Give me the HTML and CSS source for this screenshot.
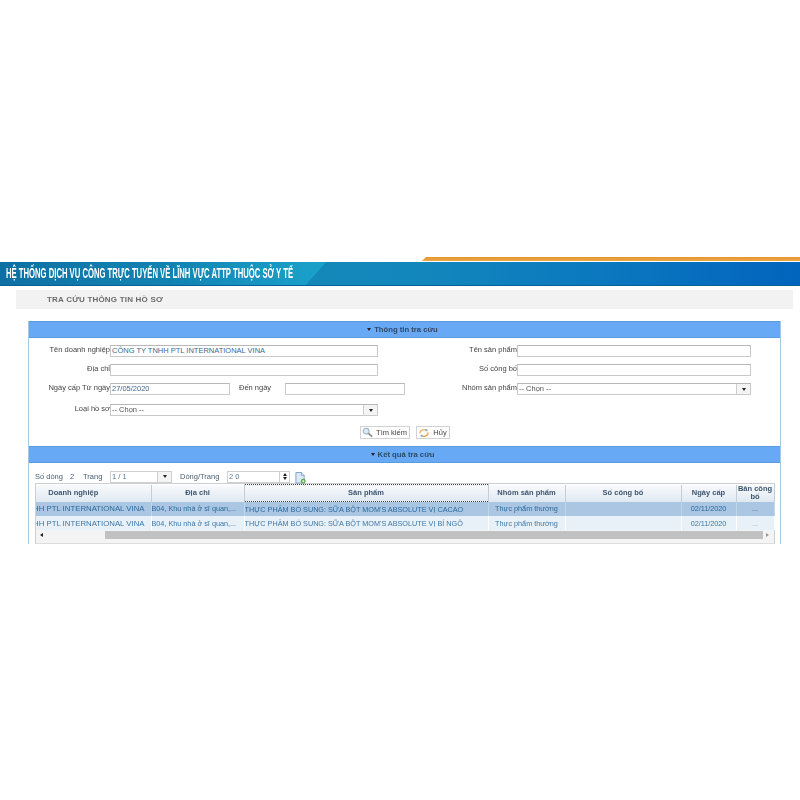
FILE: index.html
```html
<!DOCTYPE html>
<html lang="vi">
<head>
    <meta charset="UTF-8">
    <title>Tra cứu thông tin hồ sơ</title>
    <link rel="stylesheet" href="styles.css">
</head>

<body>
    <div class="page">
        <div class="accent-row"><div class="accent"></div></div>
        <div class="banner">
            <div class="banner-wedge"></div>
            <h1>HỆ THỐNG DỊCH VỤ CÔNG TRỰC TUYẾN VỀ LĨNH VỰC ATTP THUỘC SỞ Y TẾ</h1>
        </div>
        <div class="page-title">TRA CỨU THÔNG TIN HỒ SƠ</div>

        <div class="panel">
            <div class="panel-head"><span class="caret"></span>Thông tin tra cứu</div>
            <div class="search-form">
                <div class="form-col">
                    <div class="form-row">
                        <label>Tên doanh nghiệp</label>
                        <div class="input wide">CÔNG TY TNHH PTL INTERNATIONAL VINA</div>
                    </div>
                    <div class="form-row">
                        <label>Địa chỉ</label>
                        <div class="input wide"></div>
                    </div>
                    <div class="form-row">
                        <label>Ngày cấp Từ ngày</label>
                        <div class="input date">27/05/2020</div>
                        <span class="date-to">Đến ngày</span>
                        <div class="input date-end"></div>
                    </div>
                    <div class="form-row last">
                        <label>Loại hồ sơ</label>
                        <div class="input wide select">-- Chọn --<span class="select-btn"><span class="caret dark"></span></span></div>
                    </div>
                </div>
                <div class="form-col right">
                    <div class="form-row">
                        <label>Tên sản phẩm</label>
                        <div class="input wide"></div>
                    </div>
                    <div class="form-row">
                        <label>Số công bố</label>
                        <div class="input wide"></div>
                    </div>
                    <div class="form-row">
                        <label>Nhóm sản phẩm</label>
                        <div class="input wide select">-- Chọn --<span class="select-btn"><span class="caret dark"></span></span></div>
                    </div>
                </div>
            </div>
            <div class="actions">
                <button class="btn search">
                    <svg width="11" height="11" viewBox="0 0 12 12"><circle cx="4.5" cy="4.5" r="3.2" fill="#dce8f2" stroke="#9fb4c6" stroke-width="1.2"/><path d="M7 7l4 3.5" stroke="#8d8d8d" stroke-width="2"/></svg>
                    Tìm kiếm
                </button>
                <button class="btn cancel">
                    <svg width="12" height="10" viewBox="0 0 13 11"><path d="M2 6a4.5 4 0 0 1 7-3.5" fill="none" stroke="#eeb35c" stroke-width="1.6"/><path d="M11 5a4.5 4 0 0 1-7 3.5" fill="none" stroke="#e9a24a" stroke-width="1.6"/><path d="M8 0.8l3 1.4-2.4 2z" fill="#7fa6cf"/><path d="M5 10.2l-3-1.4 2.4-2z" fill="#7fa6cf"/></svg>
                    Hủy
                </button>
            </div>

            <div class="panel-head"><span class="caret"></span>Kết quả tra cứu</div>
            <div class="results">
                <div class="toolbar">
                    <span class="count-label">Số dòng</span>
                    <span class="count-value">2</span>
                    <span class="page-label">Trang</span>
                    <div class="spin page-select">1 / 1<span class="select-btn"><span class="caret dark"></span></span></div>
                    <span class="rows-label">Dòng/Trang</span>
                    <div class="spin rows-input">2 0<span class="spin-btn"><i class="up"></i><i class="down"></i></span></div>
                    <svg class="export" width="11" height="12" viewBox="0 0 12 13"><path d="M1 .5h6l3 3v8.5H1z" fill="#dce9f6" stroke="#7f9fc0"/><path d="M7 .5v3h3" fill="#fff" stroke="#7f9fc0"/><circle cx="9" cy="10" r="2.6" fill="#5aa845"/><path d="M7.6 10h2.8M9 8.6v2.8" stroke="#fff" stroke-width=".8"/></svg>
                </div>
                <div class="grid">
                    <table>
                        <colgroup>
                            <col class="c1"><col class="c2"><col class="c3"><col class="c4"><col class="c5"><col class="c6"><col class="c7">
                        </colgroup>
                        <thead>
                            <tr>
                                <th class="first">Doanh nghiệp</th>
                                <th>Địa chỉ</th>
                                <th class="sorted">Sản phẩm</th>
                                <th>Nhóm sản phẩm</th>
                                <th>Số công bố</th>
                                <th>Ngày cấp</th>
                                <th>Bản công bố</th>
                            </tr>
                        </thead>
                        <tbody>
                            <tr class="selected">
                                <td><div class="clip-left">CÔNG TY TNHH PTL INTERNATIONAL VINA</div></td>
                                <td>B04, Khu nhà ở sĩ quan,...</td>
                                <td>THỰC PHẨM BỔ SUNG: SỮA BỘT MOM'S ABSOLUTE VỊ CACAO</td>
                                <td class="center">Thực phẩm thường</td>
                                <td></td>
                                <td class="center">02/11/2020</td>
                                <td class="center faint">...</td>
                            </tr>
                            <tr>
                                <td><div class="clip-left">CÔNG TY TNHH PTL INTERNATIONAL VINA</div></td>
                                <td>B04, Khu nhà ở sĩ quan,...</td>
                                <td>THỰC PHẨM BỔ SUNG: SỮA BỘT MOM'S ABSOLUTE VỊ BÍ NGÔ</td>
                                <td class="center">Thực phẩm thường</td>
                                <td></td>
                                <td class="center">02/11/2020</td>
                                <td class="center faint">...</td>
                            </tr>
                        </tbody>
                    </table>
                    <div class="scrollbar">
                        <span class="arrow left"></span>
                        <div class="thumb"></div>
                        <span class="arrow right"></span>
                    </div>
                </div>
            </div>
        </div>
    </div>
</body>
</html>
```

FILE: styles.css
```css
body {
    margin: 0;
    background-color: #fff;
    font-family: 'Liberation Sans', Arial, sans-serif;
    font-size: 7.5px;
    color: #444;
}

.page {
    padding-top: 257px;
    height: 544px;
    box-sizing: border-box;
    filter: blur(0.3px);
}

.accent-row {
    height: 5px;
    display: flex;
    justify-content: flex-end;
}

.accent {
    width: 378px;
    height: 4px;
    background: linear-gradient(#e8952c, #e9a648);
    clip-path: polygon(4px 0, 100% 0, 100% 100%, 0 100%);
}

.banner {
    position: relative;
    height: 24px;
    background: linear-gradient(90deg, #0e6fa2 0, #1180ae 130px, #1488b8 300px, #1287bc 420px, #0b78bf 600px, #0264bd 800px);
    border-bottom: 1px solid #0a5f96;
    box-sizing: border-box;
    overflow: hidden;
}

.banner-wedge {
    position: absolute;
    top: 0;
    left: 170px;
    width: 156px;
    height: 100%;
    background: linear-gradient(90deg, rgba(28, 160, 200, 0), #1aa2c9);
    clip-path: polygon(0 0, 100% 0, 87% 100%, 0 100%);
}

/* no condensed face installed, so the title is squeezed to the reference width */
h1 {
    position: relative;
    margin: 0 0 0 6px;
    font-size: 14.5px;
    font-weight: bold;
    line-height: 23px;
    color: #fff;
    white-space: nowrap;
    transform: scaleX(0.53);
    transform-origin: left center;
}

.page-title {
    margin: 4px 7px 0 16px;
    height: 19px;
    padding-left: 31px;
    background-color: #f2f2f3;
    font-size: 8px;
    font-weight: bold;
    line-height: 19px;
    color: #6b6b6b;
    letter-spacing: 0.2px;
}

.panel {
    margin: 12px 19px 0 28px;
    border-left: 1px solid #a6c8de;
    border-right: 1px solid #a6c8de;
    height: 223px;
}

.panel-head {
    height: 17px;
    padding-right: 4px;
    background-color: #68a9f5;
    border-top: 1px solid #5b9bdc;
    border-bottom: 1px solid #5b9bdc;
    box-sizing: border-box;
    text-align: center;
    font-size: 7.7px;
    font-weight: bold;
    line-height: 16px;
    color: #2d4a68;
}

.caret {
    display: inline-block;
    width: 0;
    height: 0;
    margin-right: 3px;
    vertical-align: 1px;
    border-left: 2.5px solid transparent;
    border-right: 2.5px solid transparent;
    border-top: 3px solid #223;
}

.caret.dark {
    margin: 0;
    border-top-color: #222;
}

.search-form {
    display: flex;
    padding-top: 7px;
}

.form-col {
    width: 376px;
    display: flex;
    flex-direction: column;
    gap: 7px;
}

.form-col.right {
    width: 346px;
}

.form-row {
    display: flex;
    align-items: center;
    height: 12px;
}

.form-row.last {
    margin-top: 2px;
}

.form-row label {
    width: 81px;
    text-align: right;
    flex: none;
    margin-top: -3px;
}

.form-col.right label {
    width: 112px;
}

.input {
    height: 12px;
    box-sizing: border-box;
    border: 1px solid #cacaca;
    border-top-color: #b8b8b8;
    background-color: #fff;
    padding-left: 1px;
    line-height: 10px;
    color: #44698e;
    white-space: nowrap;
    position: relative;
    flex: none;
}

.input.wide {
    width: 268px;
}

.form-col.right .input.wide {
    width: 234px;
}

.input.date,
.input.date-end {
    width: 120px;
}

.date-to {
    width: 55px;
    flex: none;
    padding-left: 9px;
    box-sizing: border-box;
    margin-top: -3px;
}

.select {
    color: #555;
}

.select-btn {
    position: absolute;
    top: 0;
    right: 0;
    bottom: 0;
    width: 13px;
    border-left: 1px solid #cfcfcf;
    display: flex;
    align-items: center;
    justify-content: center;
    background-color: #f4f4f4;
}

.actions {
    display: flex;
    justify-content: center;
    gap: 6px;
    padding: 10px 0 7px 0;
}

.btn {
    height: 13px;
    padding: 0;
    display: flex;
    align-items: center;
    justify-content: center;
    gap: 3px;
    border: 1px solid #d2d2d2;
    background-color: #fff;
    font-family: inherit;
    font-size: 7.5px;
    color: #444;
}

.btn.search {
    width: 50px;
}

.btn.cancel {
    width: 34px;
}

.results {
    padding: 7px 6px 0 6px;
}

.toolbar {
    display: flex;
    align-items: center;
    height: 13px;
    color: #4a5f70;
}

.count-label {
    width: 35px;
}

.count-value {
    width: 13px;
}

.page-label {
    width: 27px;
}

.spin {
    position: relative;
    height: 12px;
    box-sizing: border-box;
    border: 1px solid #cfcfcf;
    line-height: 10px;
    padding-left: 1px;
    color: #5a7a96;
}

.page-select {
    width: 62px;
}

.rows-label {
    width: 47px;
    margin-left: 8px;
}

.rows-input {
    width: 63px;
}

.spin-btn {
    position: absolute;
    top: 0;
    right: 0;
    bottom: 0;
    width: 9px;
    border-left: 1px solid #cfcfcf;
    display: flex;
    flex-direction: column;
    align-items: center;
    justify-content: center;
    gap: 1px;
}

.spin-btn i {
    width: 0;
    height: 0;
    border-left: 2.5px solid transparent;
    border-right: 2.5px solid transparent;
}

.spin-btn .up {
    border-bottom: 3px solid #222;
}

.spin-btn .down {
    border-top: 3px solid #222;
}

.export {
    margin-left: 5px;
    margin-top: 2px;
}

.grid {
    width: 740px;
    box-sizing: border-box;
    border: 1px solid #cfcfcf;
    border-bottom-color: #ddd;
}

table {
    width: 738px;
    border-collapse: collapse;
    table-layout: fixed;
}

.c1 { width: 115px; }
.c2 { width: 93px; }
.c3 { width: 244px; }
.c4 { width: 77px; }
.c5 { width: 116px; }
.c6 { width: 55px; }
.c7 { width: 38px; }

th {
    height: 16px;
    padding: 0;
    background: linear-gradient(#f8fafc, #dfe8f1);
    border-right: 1px solid #c4ccd4;
    font-size: 7.5px;
    line-height: 8px;
    font-weight: bold;
    color: #3d5670;
}

th.first {
    padding-right: 40px;
}

th.sorted {
    border-top: 1px dotted #444;
    border-bottom: 1px dotted #444;
    border-left: 1px solid #8a98a6;
}

td {
    height: 14px;
    padding: 0;
    background-color: #e8f0f8;
    font-size: 7.25px;
    line-height: 9px;
    color: #3f78a8;
    white-space: nowrap;
    overflow: hidden;
    border-right: 1px solid #fff;
}

tr.selected td {
    background-color: #abc6e2;
    color: #2a6a9e;
    border-right-color: #c2d6ea;
}

.center {
    text-align: center;
}

td.faint {
    color: #8eaac4;
}

.clip-left {
    display: flex;
    justify-content: flex-end;
    overflow: hidden;
    padding-right: 6px;
    font-size: 7.8px;
}

.scrollbar {
    display: flex;
    align-items: flex-start;
    height: 13px;
    background-color: #f4f4f4;
}

.thumb {
    width: 658px;
    height: 8px;
    margin-top: 1px;
    margin-left: 62px;
    background-color: #c1c1c1;
}

.arrow {
    width: 0;
    height: 0;
    margin-top: 3px;
    border-top: 2.5px solid transparent;
    border-bottom: 2.5px solid transparent;
}

.arrow.left {
    margin-left: 4px;
    border-right: 3px solid #222;
}

.arrow.right {
    margin-left: 3px;
    border-left: 3px solid #999;
}
```
